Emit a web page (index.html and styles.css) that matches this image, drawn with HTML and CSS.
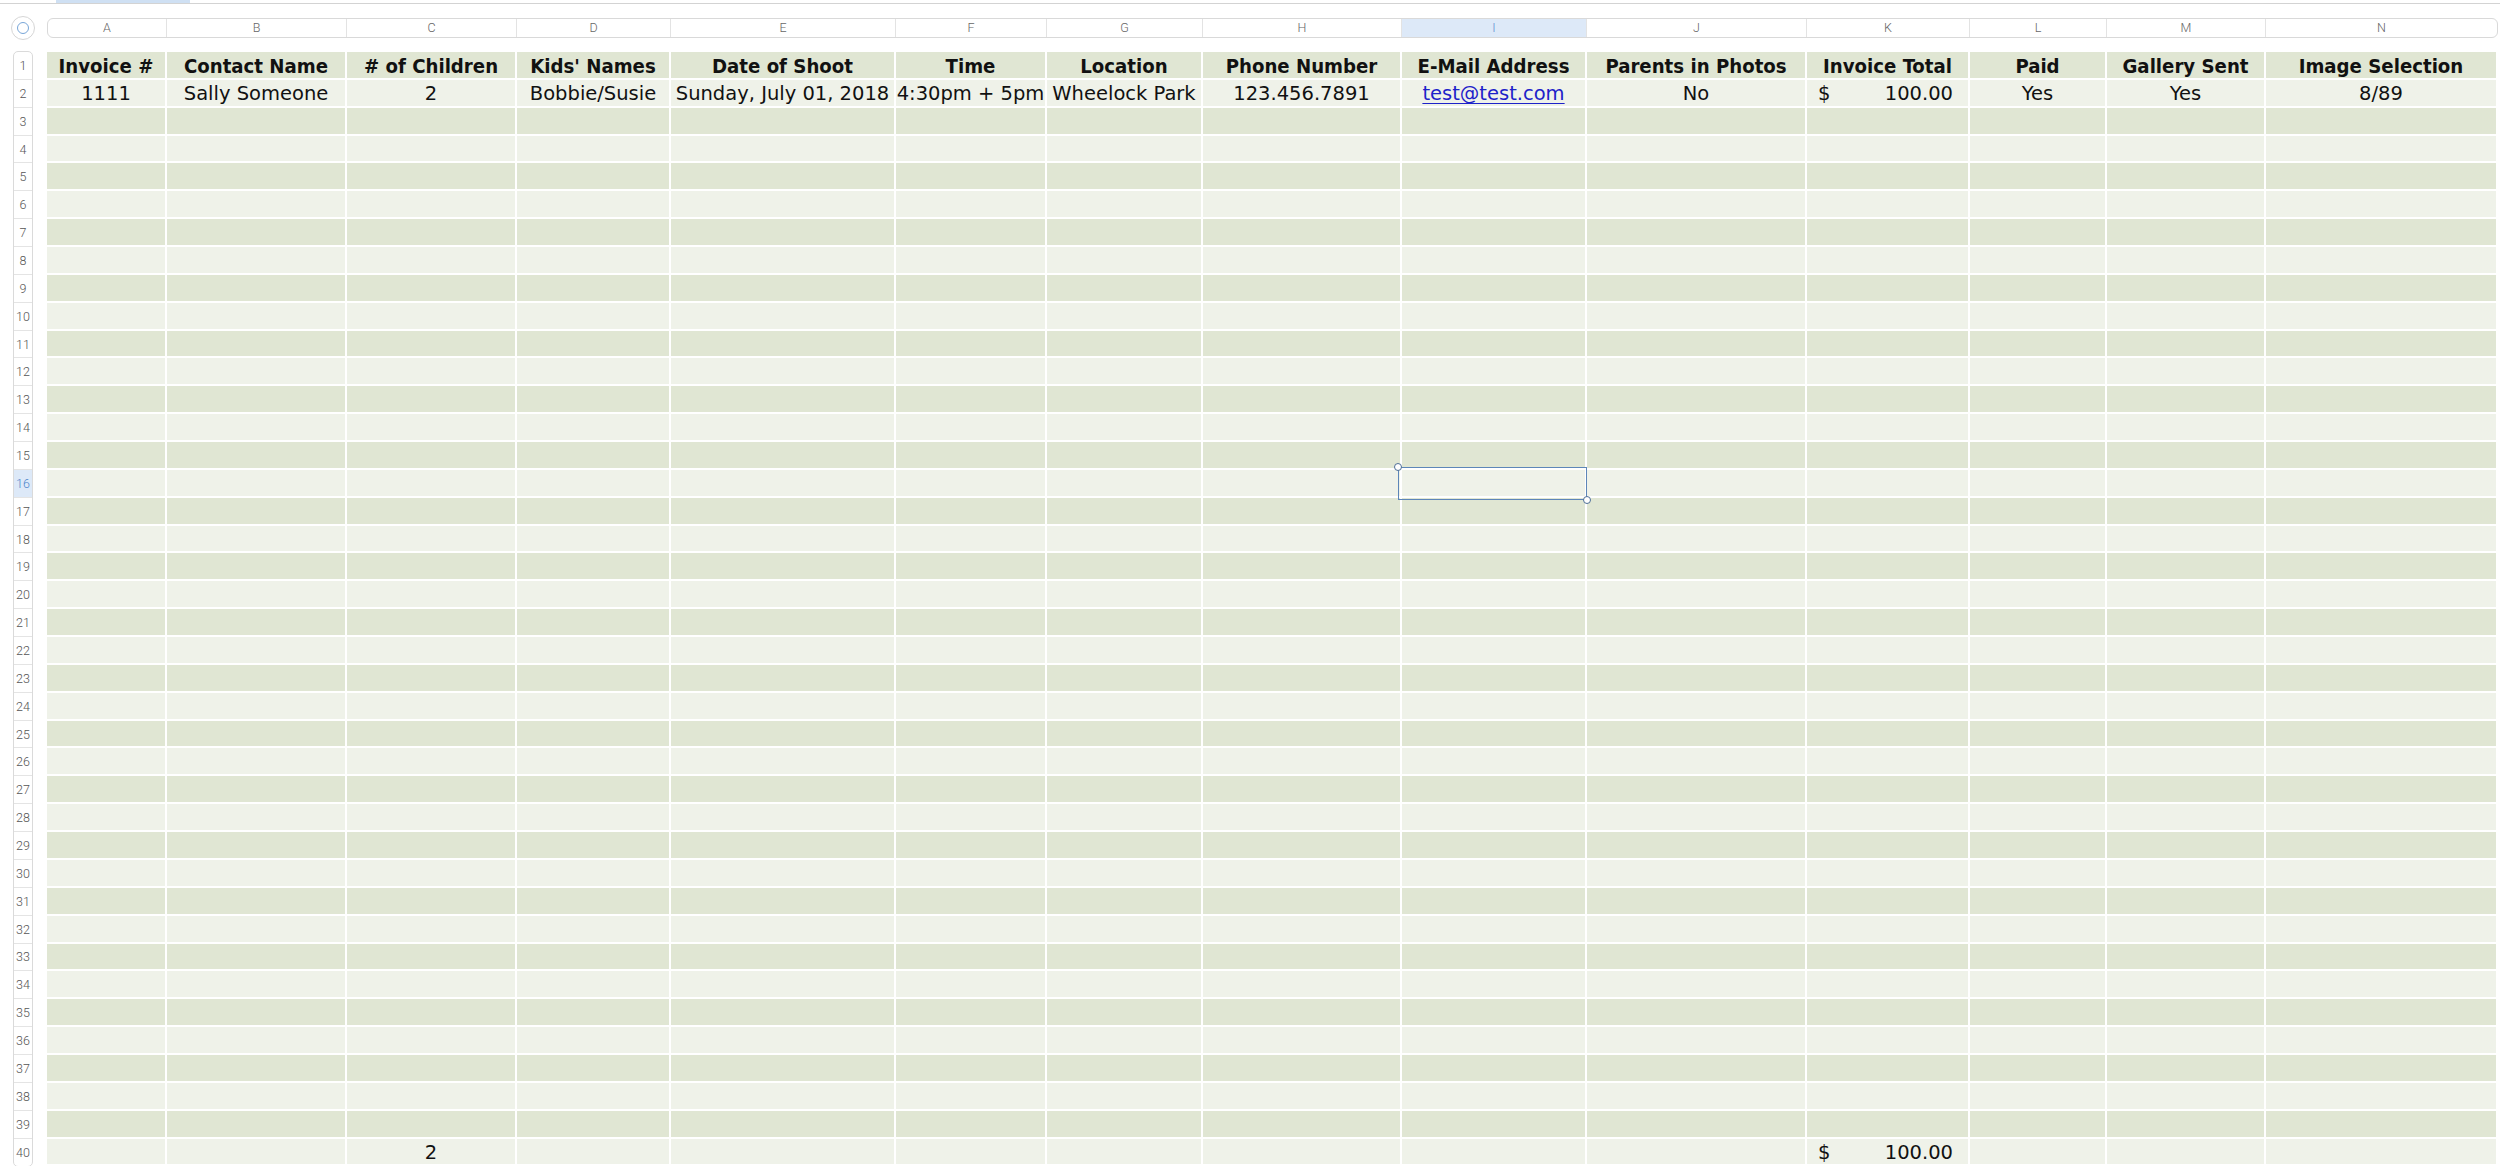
FILE: index.html
```html
<!DOCTYPE html>
<html lang="en">
<head>
<meta charset="utf-8">
<title>Invoices</title>
<link rel="stylesheet" href="styles.css">
</head>
<body>
<div class="topline"><div class="tabmark"></div></div>
<div class="colbar">
  <div class="corner"><div class="corner-dot"></div></div>
  <div class="colhead">
    <div class="ch">A</div><div class="ch">B</div><div class="ch">C</div><div class="ch">D</div><div class="ch">E</div><div class="ch">F</div><div class="ch">G</div><div class="ch">H</div><div class="ch ch-sel">I</div><div class="ch">J</div><div class="ch">K</div><div class="ch">L</div><div class="ch">M</div><div class="ch">N</div>
  </div>
</div>
<div class="sheet">
  <div class="rowhead">
    <div class="rh">1</div><div class="rh">2</div><div class="rh">3</div><div class="rh">4</div><div class="rh">5</div><div class="rh">6</div><div class="rh">7</div><div class="rh">8</div><div class="rh">9</div><div class="rh">10</div>
    <div class="rh">11</div><div class="rh">12</div><div class="rh">13</div><div class="rh">14</div><div class="rh">15</div><div class="rh rh-sel">16</div><div class="rh">17</div><div class="rh">18</div><div class="rh">19</div><div class="rh">20</div>
    <div class="rh">21</div><div class="rh">22</div><div class="rh">23</div><div class="rh">24</div><div class="rh">25</div><div class="rh">26</div><div class="rh">27</div><div class="rh">28</div><div class="rh">29</div><div class="rh">30</div>
    <div class="rh">31</div><div class="rh">32</div><div class="rh">33</div><div class="rh">34</div><div class="rh">35</div><div class="rh">36</div><div class="rh">37</div><div class="rh">38</div><div class="rh">39</div><div class="rh">40</div>
  </div>
  <div class="grid">
    <div class="row d head"><span>Invoice #</span><span>Contact Name</span><span># of Children</span><span>Kids' Names</span><span>Date of Shoot</span><span>Time</span><span>Location</span><span>Phone Number</span><span>E-Mail Address</span><span>Parents in Photos</span><span>Invoice Total</span><span>Paid</span><span>Gallery Sent</span><span>Image Selection</span></div>
    <div class="row l"><span>1111</span><span>Sally Someone</span><span>2</span><span>Bobbie/Susie</span><span>Sunday, July 01, 2018</span><span>4:30pm + 5pm</span><span>Wheelock Park</span><span>123.456.7891</span><span><a class="link" href="#">test@test.com</a></span><span>No</span><span class="money"><b class="cur">$</b><b class="amt">100.00</b></span><span>Yes</span><span>Yes</span><span>8/89</span></div>
    <div class="row d"><span></span><span></span><span></span><span></span><span></span><span></span><span></span><span></span><span></span><span></span><span></span><span></span><span></span><span></span></div>
    <div class="row l"><span></span><span></span><span></span><span></span><span></span><span></span><span></span><span></span><span></span><span></span><span></span><span></span><span></span><span></span></div>
    <div class="row d"><span></span><span></span><span></span><span></span><span></span><span></span><span></span><span></span><span></span><span></span><span></span><span></span><span></span><span></span></div>
    <div class="row l"><span></span><span></span><span></span><span></span><span></span><span></span><span></span><span></span><span></span><span></span><span></span><span></span><span></span><span></span></div>
    <div class="row d"><span></span><span></span><span></span><span></span><span></span><span></span><span></span><span></span><span></span><span></span><span></span><span></span><span></span><span></span></div>
    <div class="row l"><span></span><span></span><span></span><span></span><span></span><span></span><span></span><span></span><span></span><span></span><span></span><span></span><span></span><span></span></div>
    <div class="row d"><span></span><span></span><span></span><span></span><span></span><span></span><span></span><span></span><span></span><span></span><span></span><span></span><span></span><span></span></div>
    <div class="row l"><span></span><span></span><span></span><span></span><span></span><span></span><span></span><span></span><span></span><span></span><span></span><span></span><span></span><span></span></div>
    <div class="row d"><span></span><span></span><span></span><span></span><span></span><span></span><span></span><span></span><span></span><span></span><span></span><span></span><span></span><span></span></div>
    <div class="row l"><span></span><span></span><span></span><span></span><span></span><span></span><span></span><span></span><span></span><span></span><span></span><span></span><span></span><span></span></div>
    <div class="row d"><span></span><span></span><span></span><span></span><span></span><span></span><span></span><span></span><span></span><span></span><span></span><span></span><span></span><span></span></div>
    <div class="row l"><span></span><span></span><span></span><span></span><span></span><span></span><span></span><span></span><span></span><span></span><span></span><span></span><span></span><span></span></div>
    <div class="row d"><span></span><span></span><span></span><span></span><span></span><span></span><span></span><span></span><span></span><span></span><span></span><span></span><span></span><span></span></div>
    <div class="row l"><span></span><span></span><span></span><span></span><span></span><span></span><span></span><span></span><span class="selcell"><i class="selbox"><i class="handle h-tl"></i><i class="handle h-br"></i></i></span><span></span><span></span><span></span><span></span><span></span></div>
    <div class="row d"><span></span><span></span><span></span><span></span><span></span><span></span><span></span><span></span><span></span><span></span><span></span><span></span><span></span><span></span></div>
    <div class="row l"><span></span><span></span><span></span><span></span><span></span><span></span><span></span><span></span><span></span><span></span><span></span><span></span><span></span><span></span></div>
    <div class="row d"><span></span><span></span><span></span><span></span><span></span><span></span><span></span><span></span><span></span><span></span><span></span><span></span><span></span><span></span></div>
    <div class="row l"><span></span><span></span><span></span><span></span><span></span><span></span><span></span><span></span><span></span><span></span><span></span><span></span><span></span><span></span></div>
    <div class="row d"><span></span><span></span><span></span><span></span><span></span><span></span><span></span><span></span><span></span><span></span><span></span><span></span><span></span><span></span></div>
    <div class="row l"><span></span><span></span><span></span><span></span><span></span><span></span><span></span><span></span><span></span><span></span><span></span><span></span><span></span><span></span></div>
    <div class="row d"><span></span><span></span><span></span><span></span><span></span><span></span><span></span><span></span><span></span><span></span><span></span><span></span><span></span><span></span></div>
    <div class="row l"><span></span><span></span><span></span><span></span><span></span><span></span><span></span><span></span><span></span><span></span><span></span><span></span><span></span><span></span></div>
    <div class="row d"><span></span><span></span><span></span><span></span><span></span><span></span><span></span><span></span><span></span><span></span><span></span><span></span><span></span><span></span></div>
    <div class="row l"><span></span><span></span><span></span><span></span><span></span><span></span><span></span><span></span><span></span><span></span><span></span><span></span><span></span><span></span></div>
    <div class="row d"><span></span><span></span><span></span><span></span><span></span><span></span><span></span><span></span><span></span><span></span><span></span><span></span><span></span><span></span></div>
    <div class="row l"><span></span><span></span><span></span><span></span><span></span><span></span><span></span><span></span><span></span><span></span><span></span><span></span><span></span><span></span></div>
    <div class="row d"><span></span><span></span><span></span><span></span><span></span><span></span><span></span><span></span><span></span><span></span><span></span><span></span><span></span><span></span></div>
    <div class="row l"><span></span><span></span><span></span><span></span><span></span><span></span><span></span><span></span><span></span><span></span><span></span><span></span><span></span><span></span></div>
    <div class="row d"><span></span><span></span><span></span><span></span><span></span><span></span><span></span><span></span><span></span><span></span><span></span><span></span><span></span><span></span></div>
    <div class="row l"><span></span><span></span><span></span><span></span><span></span><span></span><span></span><span></span><span></span><span></span><span></span><span></span><span></span><span></span></div>
    <div class="row d"><span></span><span></span><span></span><span></span><span></span><span></span><span></span><span></span><span></span><span></span><span></span><span></span><span></span><span></span></div>
    <div class="row l"><span></span><span></span><span></span><span></span><span></span><span></span><span></span><span></span><span></span><span></span><span></span><span></span><span></span><span></span></div>
    <div class="row d"><span></span><span></span><span></span><span></span><span></span><span></span><span></span><span></span><span></span><span></span><span></span><span></span><span></span><span></span></div>
    <div class="row l"><span></span><span></span><span></span><span></span><span></span><span></span><span></span><span></span><span></span><span></span><span></span><span></span><span></span><span></span></div>
    <div class="row d"><span></span><span></span><span></span><span></span><span></span><span></span><span></span><span></span><span></span><span></span><span></span><span></span><span></span><span></span></div>
    <div class="row l"><span></span><span></span><span></span><span></span><span></span><span></span><span></span><span></span><span></span><span></span><span></span><span></span><span></span><span></span></div>
    <div class="row d"><span></span><span></span><span></span><span></span><span></span><span></span><span></span><span></span><span></span><span></span><span></span><span></span><span></span><span></span></div>
    <div class="row l"><span></span><span></span><span>2</span><span></span><span></span><span></span><span></span><span></span><span></span><span></span><span class="money"><b class="cur">$</b><b class="amt">100.00</b></span><span></span><span></span><span></span></div>
  </div>
</div>
</body>
</html>
```
FILE: styles.css
```css
* { box-sizing: border-box; }
html, body { margin: 0; padding: 0; background: #ffffff; }
body { width: 2500px; height: 1166px; overflow: hidden; }

.topline {
  height: 4px;
  border-bottom: 1px solid #d3d3d3;
  display: flex;
}
.tabmark {
  margin-left: 56px;
  width: 134px;
  height: 3px;
  background: #cfe0f3;
}

.colbar {
  display: flex;
  align-items: center;
  height: 24px;
  margin-top: 12px;
}
.corner {
  margin-left: 11px;
  width: 24px;
  height: 24px;
  border-radius: 50%;
  border: 1px solid #d6d6d6;
  background: #fff;
  display: flex;
  align-items: center;
  justify-content: center;
}
.corner-dot {
  width: 12px;
  height: 12px;
  border-radius: 50%;
  border: 1.5px solid #78a6d8;
}
.colhead {
  margin-left: 12px;
  width: 2451px;
  height: 20px;
  border: 1px solid #d9d9d9;
  border-radius: 6px;
  background: #fff;
  display: grid;
  grid-template-columns: 118px 178px 168px 152px 223px 149px 154px 197px 183px 218px 161px 135px 157px 1fr;
  column-gap: 2px;
  overflow: hidden;
}
.ch {
  font-family: Roboto, "Liberation Sans", sans-serif;
  font-weight: 300;
  font-size: 12.5px;
  line-height: 18px;
  color: #666666;
  text-align: center;
}
.ch + .ch {
  border-left: 1px solid #e3e3e3;
  margin-left: -2px;
}
.ch-sel {
  background: #dde9f8;
  color: #5d8fd0;
}

.sheet {
  display: flex;
  align-items: flex-start;
  margin-top: 11px;
}
.rowhead {
  margin-left: 13px;
  width: 20px;
  border: 1px solid #dadada;
  border-radius: 5px;
  background: #fff;
  display: flex;
  flex-direction: column;
  overflow: hidden;
}
.rh {
  height: 27.86px;
  border-bottom: 1px solid #e4e4e4;
  font-family: Roboto, "Liberation Sans", sans-serif;
  font-weight: 300;
  font-size: 12.5px;
  color: #555555;
  display: flex;
  align-items: center;
  justify-content: center;
}
.rh:last-child { border-bottom: 0; }
.rh-sel {
  background: #dde9f8;
  color: #4f86cc;
}

.grid {
  margin-left: 14px;
  margin-top: 1px;
  display: flex;
  flex-direction: column;
  row-gap: 2px;
  background: #ffffff;
}
.row {
  display: grid;
  grid-template-columns: 118px 178px 168px 152px 223px 149px 154px 197px 183px 218px 161px 135px 157px 230px;
  column-gap: 2px;
  height: 25.86px;
  font-family: "DejaVu Sans", sans-serif;
  font-size: 19.5px;
  color: #111111;
}
.row > span {
  display: flex;
  align-items: center;
  justify-content: center;
  padding-top: 2px;
  white-space: nowrap;
  overflow: visible;
}
.row.d > span { background: #e0e6d3; }
.row.l > span { background: #eff2e9; }
.row.head {
  font-family: "DejaVu Sans Condensed", "DejaVu Sans", sans-serif;
  font-stretch: condensed;
  font-weight: bold;
  font-size: 20.2px;
}

.link {
  color: #1e22c9;
  text-decoration: underline;
  text-underline-offset: 3px;
}

.row > span.money {
  justify-content: space-between;
  padding: 2px 15px 0 11px;
}
.cur, .amt { font-weight: normal; }

.selcell { position: relative; }
.selbox {
  position: absolute;
  top: -3px;
  bottom: -4px;
  left: -4px;
  right: -2px;
  border: 1.5px solid #5d86b8;
}
.handle {
  position: absolute;
  width: 8px;
  height: 8px;
  border-radius: 50%;
  background: #ffffff;
  border: 1.5px solid #4d6e96;
}
.h-tl { top: -5px; left: -5px; }
.h-br { bottom: -5px; right: -5px; }
```
